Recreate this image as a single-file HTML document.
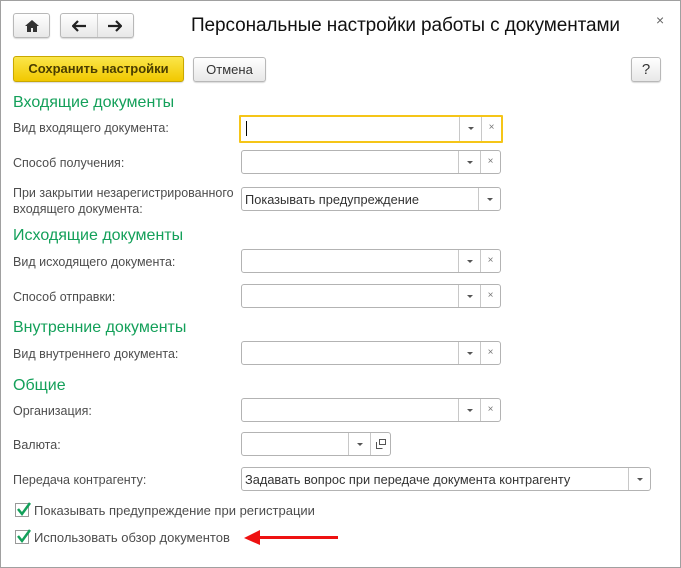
<!DOCTYPE html>
<html><head><meta charset="utf-8"><style>
*{box-sizing:border-box;margin:0;padding:0}
body{width:681px;height:568px;background:#fff;font-family:"Liberation Sans",Arial,sans-serif;position:relative;overflow:hidden;color:#4d4d4d}
.frame{position:absolute;left:0;top:0;width:681px;height:568px;border:1px solid #a0a0a0}
.btn{position:absolute;border:1px solid #b8b8b8;border-radius:3px;background:linear-gradient(#fff,#e8e8e8);box-shadow:0 1px 1px rgba(0,0,0,.15);font-size:13px;color:#333;text-align:center}
.lbl{position:absolute;left:13px;font-size:12.5px;color:#4d4d4d}
.h{position:absolute;left:13px;font-size:16px;color:#14a05a}
.f{position:absolute;height:24px;border:1px solid #b3b3b3;border-radius:3px;background:#fff;font-size:13px;color:#333}
.f .d{position:absolute;top:0;bottom:0;border-left:1px solid #c8c8c8;width:22px}
.f .d:after{content:"";position:absolute;left:8px;top:10px;border:3px solid transparent;border-top:3px solid #555}
.f .x{position:absolute;top:0;bottom:0;right:0;width:20px;border-left:1px solid #c8c8c8;font-size:10px;color:#777;text-align:center;line-height:22px}
.cb{position:absolute;left:15px;width:14px;height:14px;border:1px solid #999;background:#fff}
.cb svg{position:absolute;left:0;top:-3px}
</style></head><body>
<div class="frame"></div>
<div class="btn" style="left:13px;top:13px;width:37px;height:25px"><svg width="14" height="12" style="margin-top:6px" viewBox="0 0 14 12"><path d="M7 0L0 6h2v6h4V8h2v4h4V6h2z" fill="#333"/></svg></div>
<div class="btn" style="left:60px;top:13px;width:74px;height:25px"><div style="position:absolute;left:36px;top:0;bottom:0;border-left:1px solid #ccc"></div>
<svg width="14" height="12" style="position:absolute;left:11px;top:6px" viewBox="0 0 14 12"><path d="M1 6h13M6 1L1 6l5 5" fill="none" stroke="#222" stroke-width="2.2"/></svg>
<svg width="14" height="12" style="position:absolute;left:47px;top:6px" viewBox="0 0 14 12"><path d="M0 6h13M8 1l5 5-5 5" fill="none" stroke="#222" stroke-width="2.2"/></svg></div>
<div style="position:absolute;left:191px;top:15px;font-size:19px;color:#111;letter-spacing:-0.1px">Персональные настройки работы с документами</div>
<div style="position:absolute;left:656px;top:12px;font-size:14px;color:#666">×</div>
<div class="btn" style="left:13px;top:56px;width:171px;height:26px;background:linear-gradient(#fbe64a,#f1c800);border-color:#c9a800;font-weight:bold;line-height:24px;color:#4a3d00">Сохранить настройки</div>
<div class="btn" style="left:193px;top:57px;width:73px;height:25px;line-height:23px">Отмена</div>
<div class="btn" style="left:631px;top:57px;width:30px;height:25px;line-height:23px;font-size:15px">?</div>

<div class="h" style="top:94px">Входящие документы</div>
<div class="lbl" style="top:121px">Вид входящего документа:</div>
<div class="f" style="left:239px;top:115px;width:264px;height:28px;border:2px solid #f5c518;border-radius:1px"><div style="position:absolute;left:5px;top:4px;width:1px;height:15px;background:#000"></div><div class="d" style="right:20px"></div><div class="x">×</div></div>
<div class="lbl" style="top:156px">Способ получения:</div>
<div class="f" style="left:241px;top:150px;width:260px"><div class="d" style="right:20px"></div><div class="x">×</div></div>
<div class="lbl" style="top:185px;line-height:16px">При закрытии незарегистрированного<br>входящего документа:</div>
<div class="f" style="left:241px;top:187px;width:260px;padding:4px 0 0 3px;font-size:12.8px">Показывать предупреждение<div class="d" style="right:0"></div></div>

<div class="h" style="top:227px">Исходящие документы</div>
<div class="lbl" style="top:255px">Вид исходящего документа:</div>
<div class="f" style="left:241px;top:249px;width:260px"><div class="d" style="right:20px"></div><div class="x">×</div></div>
<div class="lbl" style="top:290px">Способ отправки:</div>
<div class="f" style="left:241px;top:284px;width:260px"><div class="d" style="right:20px"></div><div class="x">×</div></div>

<div class="h" style="top:319px">Внутренние документы</div>
<div class="lbl" style="top:347px">Вид внутреннего документа:</div>
<div class="f" style="left:241px;top:341px;width:260px"><div class="d" style="right:20px"></div><div class="x">×</div></div>

<div class="h" style="top:377px">Общие</div>
<div class="lbl" style="top:404px">Организация:</div>
<div class="f" style="left:241px;top:398px;width:260px"><div class="d" style="right:20px"></div><div class="x">×</div></div>
<div class="lbl" style="top:438px">Валюта:</div>
<div class="f" style="left:241px;top:432px;width:150px"><div class="d" style="right:20px"></div><div class="x"><svg width="10" height="10" viewBox="0 0 10 10" style="margin-top:6px"><rect x="3.5" y="0.5" width="6" height="5" fill="none" stroke="#555"/><path d="M0.5 3v6.5h6" fill="none" stroke="#555"/></svg></div></div>
<div class="lbl" style="top:473px">Передача контрагенту:</div>
<div class="f" style="left:241px;top:467px;width:410px;padding:4px 0 0 3px;font-size:12.8px">Задавать вопрос при передаче документа контрагенту<div class="d" style="right:0"></div></div>

<div class="cb" style="top:503px"><svg width="16" height="16" viewBox="0 0 16 16"><path d="M2 8l4 5 8-11" fill="none" stroke="#13a05a" stroke-width="2.5"/></svg></div>
<div class="lbl" style="left:34px;top:503px;font-size:13px">Показывать предупреждение при регистрации</div>
<div class="cb" style="top:530px"><svg width="16" height="16" viewBox="0 0 16 16"><path d="M2 8l4 5 8-11" fill="none" stroke="#13a05a" stroke-width="2.5"/></svg></div>
<div class="lbl" style="left:34px;top:530px;font-size:13px">Использовать обзор документов</div>
<svg style="position:absolute;left:244px;top:529px" width="96" height="18" viewBox="0 0 96 18"><path d="M0 9L16 1v6h78v3H16v6z" fill="#ee1111"/></svg>
</body></html>
